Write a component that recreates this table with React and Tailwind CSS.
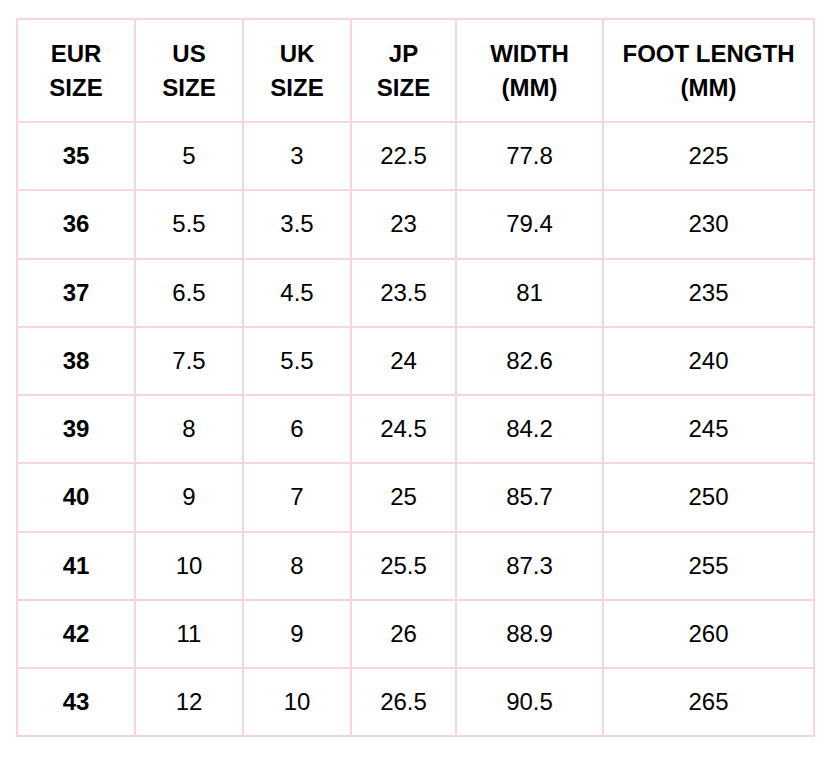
const HEAD = [
  ["EUR", "SIZE"],
  ["US", "SIZE"],
  ["UK", "SIZE"],
  ["JP", "SIZE"],
  ["WIDTH", "(MM)"],
  ["FOOT LENGTH", "(MM)"],
];

const WIDTHS = ["w-[118px]", "w-[108px]", "w-[108px]", "w-[105px]", "w-[147px]", "w-[211px]"];

const ROWS = [
  ["35", "5", "3", "22.5", "77.8", "225"],
  ["36", "5.5", "3.5", "23", "79.4", "230"],
  ["37", "6.5", "4.5", "23.5", "81", "235"],
  ["38", "7.5", "5.5", "24", "82.6", "240"],
  ["39", "8", "6", "24.5", "84.2", "245"],
  ["40", "9", "7", "25", "85.7", "250"],
  ["41", "10", "8", "25.5", "87.3", "255"],
  ["42", "11", "9", "26", "88.9", "260"],
  ["43", "12", "10", "26.5", "90.5", "265"],
];

export default function App() {
  return (
    <div className="min-h-screen bg-white pl-4 pt-[18px] font-['Liberation_Sans',Arial,sans-serif] text-[24px] leading-[34px] text-black">
      <table className="w-[797px] table-fixed border-collapse text-center">
        <thead>
          <tr>
            {HEAD.map(([a, b], i) => (
              <th key={a} className={`${WIDTHS[i]} border-2 border-[#f7d3df] py-[16.5px] font-bold`}>
                {a}
                <br />
                {b}
              </th>
            ))}
          </tr>
        </thead>
        <tbody>
          {ROWS.map((row) => (
            <tr key={row[0]}>
              {row.map((cell, i) => (
                <td
                  key={i}
                  className={`border-2 border-[#f7d3df] py-[16.125px] ${i === 0 ? "font-bold" : "font-normal"}`}
                >
                  {cell}
                </td>
              ))}
            </tr>
          ))}
        </tbody>
      </table>
    </div>
  );
}
